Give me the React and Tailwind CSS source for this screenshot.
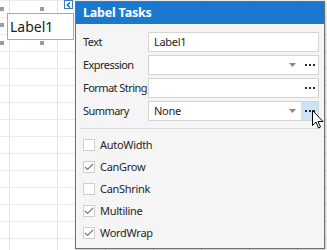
import React from 'react';

const fields = [
  { label: 'Text', value: 'Label1', drop: false, more: false },
  { label: 'Expression', value: '', drop: true, more: true },
  { label: 'Format String', value: '', drop: false, more: true },
  { label: 'Summary', value: 'None', drop: true, more: true, hot: true },
];

const checks = [
  { label: 'AutoWidth', on: false },
  { label: 'CanGrow', on: true },
  { label: 'CanShrink', on: false },
  { label: 'Multiline', on: true },
  { label: 'WordWrap', on: true },
];

function Dots() {
  return (
    <span className="flex gap-[2px]">
      <span className="w-[2px] h-[2px] bg-[#2b2b2b]" />
      <span className="w-[2px] h-[2px] bg-[#2b2b2b]" />
      <span className="w-[2px] h-[2px] bg-[#2b2b2b]" />
    </span>
  );
}

function Field({ f }) {
  return (
    <div className="flex items-center h-[20px]">
      <div className="w-[65px] shrink-0 whitespace-nowrap tracking-[-0.55px]">{f.label}</div>
      <div className="flex-1 h-full flex items-center bg-white border border-[#d4d4d4]">
        <div className="flex-1 pl-[5px]">{f.value}</div>
        {f.drop && (
          <svg width="7" height="4" viewBox="0 0 7 4" className="mr-[5px]">
            <path d="M0 0h7L3.5 4z" fill="#8a8a8a" />
          </svg>
        )}
        {f.more && (
          <div className={`w-[17px] h-full flex items-center justify-center ${f.hot ? 'bg-[#cce4f7]' : ''}`}>
            <Dots />
          </div>
        )}
      </div>
    </div>
  );
}

function Check({ c }) {
  return (
    <div className="flex items-center h-[22px] gap-[5px]">
      <div className="w-[12px] h-[12px] bg-white border border-[#cfcfcf] flex items-center justify-center">
        {c.on && (
          <svg width="10" height="8" viewBox="0 0 10 8">
            <path d="M1 4l2.5 2.5L9 1" fill="none" stroke="#7a7a7a" strokeWidth="1.2" />
          </svg>
        )}
      </div>
      <span>{c.label}</span>
    </div>
  );
}

export default function App() {
  return (
    <div className="relative w-[327px] h-[250px] overflow-hidden bg-white bg-[linear-gradient(to_right,#e4e4e4_1px,transparent_1px),linear-gradient(to_bottom,#ececec_1px,transparent_1px)] bg-[size:48px_17px] bg-[position:9px_0px] text-[11px] tracking-[-0.3px] text-[#262626] font-['Noto_Sans',sans-serif]">
      {/* label on the design surface */}
      <div className="absolute left-[7px] top-[13px] w-[67px] h-[27px] border border-[#a9a9a9] bg-white flex items-center pl-[2px] text-[14px] tracking-normal text-[#1a1a1a]">
        Label1
      </div>
      {[
        [0, 7], [40, 7], [0, 23], [0, 41], [40, 41],
      ].map(([x, y], i) => (
        <div key={i} className="absolute w-[4px] h-[4px] bg-[#8c9fb5]" style={{ left: x, top: y }} />
      ))}

      {/* collapse button */}
      <div className="absolute left-[64px] top-0 w-[9px] h-[9px] border border-[#3a7fc4] bg-white flex items-center justify-center">
        <svg width="5" height="6" viewBox="0 0 5 6">
          <path d="M4 0.5L1.2 3L4 5.5" fill="none" stroke="#1f4f8a" strokeWidth="1.2" />
        </svg>
      </div>

      {/* smart tag panel */}
      <div className="absolute left-[75px] top-[1px] w-[250px] h-[248px] border border-[#707070] bg-[#f5f5f5] flex flex-col shadow-[1px_1px_2px_rgba(0,0,0,0.25)]">
        <div className="h-[22px] bg-[#1a78cf] text-white font-bold text-[12.5px] tracking-[-0.2px] flex items-center px-[7px]">
          Label Tasks
        </div>
        <div className="flex flex-col gap-[3px] pl-[7px] pr-[5px] pt-[8px]">
          {fields.map(f => <Field key={f.label} f={f} />)}
        </div>
        <div className="mx-[4px] mt-[7px] h-px bg-[#dadada]" />
        <div className="flex flex-col pl-[7px] pt-[5px]">
          {checks.map(c => <Check key={c.label} c={c} />)}
        </div>
      </div>

      {/* mouse cursor */}
      <svg className="absolute left-[312px] top-[110px]" width="12" height="19" viewBox="0 0 12 19">
        <path d="M0.5 0.5v15l3.5-3.5 2.5 6 2-1-2.5-5.5h5z" fill="white" stroke="black" strokeWidth="1" strokeLinejoin="round" />
      </svg>
    </div>
  );
}
